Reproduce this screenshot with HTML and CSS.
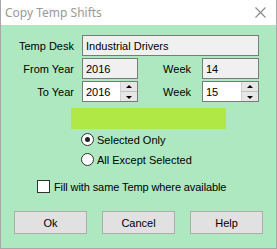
FILE: index.html
```html
<!DOCTYPE html>
<html lang="en">
<head>
    <meta charset="UTF-8">
    <title>Copy Temp Shifts</title>
    <link rel="stylesheet" href="styles.css">
</head>
<body>
    <div class="window">
        <div class="title-bar">
            <span class="title">Copy Temp Shifts</span>
            <svg class="close" width="11" height="11" viewBox="0 0 11 11">
                <path d="M0.5 0.5 L10.5 10.5 M10.5 0.5 L0.5 10.5" stroke="#8a8a8a" stroke-width="1.1" fill="none"/>
            </svg>
        </div>

        <div class="content">
            <div class="form-grid">
                <label class="label">Temp Desk</label>
                <div class="field readonly wide">Industrial Drivers</div>

                <label class="label">From Year</label>
                <div class="field readonly">2016</div>
                <label class="label week">Week</label>
                <div class="field readonly">14</div>

                <label class="label">To Year</label>
                <div class="field spin">
                    <span class="value">2016</span>
                    <span class="spinner"><span class="up"></span><span class="down"></span></span>
                </div>
                <label class="label week">Week</label>
                <div class="field spin">
                    <span class="value">15</span>
                    <span class="spinner"><span class="up"></span><span class="down"></span></span>
                </div>
            </div>

            <div class="status-bar"></div>

            <div class="options">
                <div class="radio-row"><span class="radio checked"></span>Selected Only</div>
                <div class="radio-row"><span class="radio"></span>All Except Selected</div>
            </div>

            <div class="check-row"><span class="checkbox"></span>Fill with same Temp where available</div>

            <div class="buttons">
                <button class="btn">Ok</button>
                <button class="btn">Cancel</button>
                <button class="btn">Help</button>
            </div>
        </div>
    </div>
</body>
</html>
```

FILE: styles.css
```css
body {
    margin: 0;
    font-family: "Liberation Sans", Arial, sans-serif;
    font-size: 11px;
    color: #000;
}
.window {
    width: 275px;
    height: 248px;
    border: 1px solid #a8a8a8;
    border-top: none;
    background-color: #ade8c1;
    display: flex;
    flex-direction: column;
}
.title-bar {
    height: 25px;
    background-color: #fff;
    display: flex;
    align-items: center;
    justify-content: space-between;
    padding: 0 10px 0 4px;
}
.title {
    font-family: "Noto Sans", "Open Sans", sans-serif;
    font-size: 12px;
    color: #9a9a9a;
}
.close {
    display: block;
}
.content {
    padding-top: 10px;
    display: flex;
    flex-direction: column;
}
.form-grid {
    display: grid;
    grid-template-columns: 73px 56px 48px 57px;
    column-gap: 8px;
    row-gap: 2px;
    grid-auto-rows: 21px;
    align-items: center;
}
.label {
    text-align: right;
}
.label.week {
    padding-right: 3px;
}
.field {
    height: 21px;
    box-sizing: border-box;
    border: 1px solid #7a7a7a;
    padding: 0 3px;
    display: flex;
    align-items: center;
    font-size: 11px;
}
.readonly {
    background-color: #f0f0f0;
}
.wide {
    grid-column: 2 / 5;
}
.spin {
    background-color: #fff;
    padding-right: 0;
    justify-content: space-between;
}
.spinner {
    width: 16px;
    height: 19px;
    display: flex;
    flex-direction: column;
    border-left: 1px solid #d0d0d0;
}
.spinner span {
    flex: 1;
    background-color: #e6e6e6;
    position: relative;
}
.spinner .up {
    border-bottom: 1px solid #c0c0c0;
}
.spinner .up::after,
.spinner .down::after {
    content: "";
    position: absolute;
    left: 5px;
    top: 3px;
    border-left: 3px solid transparent;
    border-right: 3px solid transparent;
}
.spinner .up::after {
    border-bottom: 3px solid #000;
}
.spinner .down::after {
    border-top: 3px solid #000;
    top: 4px;
}
.status-bar {
    margin: 6px 0 0 70px;
    width: 155px;
    height: 21px;
    background-color: #b0e845;
}
.options {
    margin: 4px 0 0 80px;
    display: flex;
    flex-direction: column;
    gap: 7px;
}
.radio-row,
.check-row {
    display: flex;
    align-items: center;
    height: 13px;
}
.radio {
    width: 11px;
    height: 11px;
    border: 1px solid #333;
    border-radius: 50%;
    background-color: #fff;
    margin-right: 3px;
    position: relative;
}
.radio.checked::after {
    content: "";
    position: absolute;
    left: 3px;
    top: 3px;
    width: 5px;
    height: 5px;
    border-radius: 50%;
    background-color: #222;
}
.check-row {
    margin: 14px 0 0 36px;
    letter-spacing: -0.1px;
}
.checkbox {
    width: 11px;
    height: 11px;
    border: 1px solid #333;
    background-color: #fff;
    margin-right: 4px;
}
.buttons {
    display: flex;
    gap: 15px;
    margin: 18px 0 0 13px;
}
.btn {
    width: 73px;
    height: 23px;
    background-color: #e1e1e1;
    border: 1px solid #adadad;
    font-family: "Liberation Sans", Arial, sans-serif;
    font-size: 11px;
    color: #000;
    padding: 0;
}
```
